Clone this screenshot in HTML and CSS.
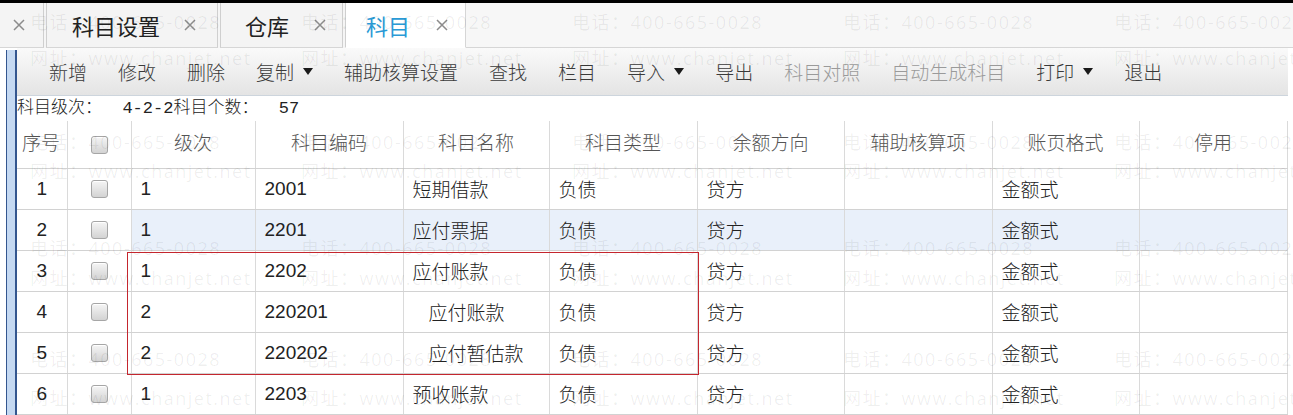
FILE: index.html
```html
<!DOCTYPE html>
<html lang="zh-CN">
<head>
  <meta charset="UTF-8">
  <title>科目</title>
  <link rel="stylesheet" href="styles.css">
</head>
<body>
  <div class="topbar"></div>

  <div class="tabs">
    <div class="tab tab-cut">
      <svg class="close" viewBox="0 0 14 14"><path d="M2 2L12 12M12 2L2 12"/></svg>
    </div>
    <div class="tab tab-one">
      <span class="tab-title">科目设置</span>
      <svg class="close" viewBox="0 0 14 14"><path d="M2 2L12 12M12 2L2 12"/></svg>
    </div>
    <div class="tab tab-two">
      <span class="tab-title">仓库</span>
      <svg class="close" viewBox="0 0 14 14"><path d="M2 2L12 12M12 2L2 12"/></svg>
    </div>
    <div class="tab tab-active">
      <span class="tab-title">科目</span>
      <svg class="close" viewBox="0 0 14 14"><path d="M2 2L12 12M12 2L2 12"/></svg>
    </div>
    <div class="tabs-rest"></div>
  </div>

  <div class="main">
    <div class="side"></div>
    <div class="content">
      <div class="toolbar">
        <span class="tool">新增</span>
        <span class="tool">修改</span>
        <span class="tool">删除</span>
        <span class="tool">复制<i class="caret"></i></span>
        <span class="tool">辅助核算设置</span>
        <span class="tool">查找</span>
        <span class="tool">栏目</span>
        <span class="tool">导入<i class="caret"></i></span>
        <span class="tool">导出</span>
        <span class="tool disabled">科目对照</span>
        <span class="tool disabled">自动生成科目</span>
        <span class="tool">打印<i class="caret"></i></span>
        <span class="tool">退出</span>
      </div>

      <div class="info">科目级次：&nbsp;&nbsp;4-2-2科目个数：&nbsp;&nbsp;57</div>

      <table class="grid">
        <colgroup>
          <col class="c-no">
          <col class="c-check">
          <col class="c-level">
          <col class="c-code">
          <col class="c-name">
          <col class="c-type">
          <col class="c-dir">
          <col class="c-aux">
          <col class="c-fmt">
          <col class="c-stop">
        </colgroup>
        <thead>
          <tr>
            <th>序号</th>
            <th><span class="cb"></span></th>
            <th>级次</th>
            <th>科目编码</th>
            <th>科目名称</th>
            <th>科目类型</th>
            <th>余额方向</th>
            <th>辅助核算项</th>
            <th>账页格式</th>
            <th>停用</th>
          </tr>
        </thead>
        <tbody>
          <tr>
            <td class="no">1</td>
            <td class="check"><span class="cb"></span></td>
            <td>1</td>
            <td>2001</td>
            <td>短期借款</td>
            <td>负债</td>
            <td>贷方</td>
            <td></td>
            <td>金额式</td>
            <td></td>
          </tr>
          <tr class="selected">
            <td class="no">2</td>
            <td class="check"><span class="cb"></span></td>
            <td>1</td>
            <td>2201</td>
            <td>应付票据</td>
            <td>负债</td>
            <td>贷方</td>
            <td></td>
            <td>金额式</td>
            <td></td>
          </tr>
          <tr>
            <td class="no">3</td>
            <td class="check"><span class="cb"></span></td>
            <td>1</td>
            <td>2202</td>
            <td>应付账款</td>
            <td>负债</td>
            <td>贷方</td>
            <td></td>
            <td>金额式</td>
            <td></td>
          </tr>
          <tr>
            <td class="no">4</td>
            <td class="check"><span class="cb"></span></td>
            <td>2</td>
            <td>220201</td>
            <td class="sub">应付账款</td>
            <td>负债</td>
            <td>贷方</td>
            <td></td>
            <td>金额式</td>
            <td></td>
          </tr>
          <tr>
            <td class="no">5</td>
            <td class="check"><span class="cb"></span></td>
            <td>2</td>
            <td>220202</td>
            <td class="sub">应付暂估款</td>
            <td>负债</td>
            <td>贷方</td>
            <td></td>
            <td>金额式</td>
            <td></td>
          </tr>
          <tr>
            <td class="no">6</td>
            <td class="check"><span class="cb"></span></td>
            <td>1</td>
            <td>2203</td>
            <td>预收账款</td>
            <td>负债</td>
            <td>贷方</td>
            <td></td>
            <td>金额式</td>
            <td></td>
          </tr>
        </tbody>
      </table>
    </div>
  </div>

  <!-- watermark layer -->
  <div class="watermark">
    <div class="wm-line t1"><span>电话：400-665-0028</span><span>电话：400-665-0028</span><span>电话：400-665-0028</span><span>电话：400-665-0028</span><span>电话：400-665-0028</span></div>
    <div class="wm-line t2"><span>网址：www.chanjet.net</span><span>网址：www.chanjet.net</span><span>网址：www.chanjet.net</span><span>网址：www.chanjet.net</span><span>网址：www.chanjet.net</span></div>
    <div class="wm-line t3"><span>电话：400-665-0028</span><span>电话：400-665-0028</span><span>电话：400-665-0028</span><span>电话：400-665-0028</span><span>电话：400-665-0028</span></div>
    <div class="wm-line t4"><span>网址：www.chanjet.net</span><span>网址：www.chanjet.net</span><span>网址：www.chanjet.net</span><span>网址：www.chanjet.net</span><span>网址：www.chanjet.net</span></div>
    <div class="wm-line t5"><span>电话：400-665-0028</span><span>电话：400-665-0028</span><span>电话：400-665-0028</span><span>电话：400-665-0028</span><span>电话：400-665-0028</span></div>
    <div class="wm-line t6"><span>网址：www.chanjet.net</span><span>网址：www.chanjet.net</span><span>网址：www.chanjet.net</span><span>网址：www.chanjet.net</span><span>网址：www.chanjet.net</span></div>
    <div class="wm-line t7"><span>电话：400-665-0028</span><span>电话：400-665-0028</span><span>电话：400-665-0028</span><span>电话：400-665-0028</span><span>电话：400-665-0028</span></div>
    <div class="wm-line t8"><span>网址：www.chanjet.net</span><span>网址：www.chanjet.net</span><span>网址：www.chanjet.net</span><span>网址：www.chanjet.net</span><span>网址：www.chanjet.net</span></div>
  </div>

  <!-- red annotation box -->
  <div class="mark"></div>
</body>
</html>
```

FILE: styles.css
```css
html, body {
  margin: 0;
  padding: 0;
}

body {
  width: 1293px;
  height: 415px;
  overflow: hidden;
  position: relative;
  background: #fff;
  font-family: "Noto Sans CJK SC", sans-serif;
  color: #333;
}

.topbar {
  height: 3px;
  background: #000;
}

/* tabs */
.tabs {
  display: flex;
  height: 45px;
  background: #f5f5f5;
}

.tab {
  box-sizing: border-box;
  display: flex;
  align-items: center;
  justify-content: space-between;
  height: 45px;
  margin-right: 2px;
  border-left: 1px solid #cfcfcf;
  border-right: 1px solid #cfcfcf;
  border-bottom: 1px solid #d6d6d6;
  background: #f4f4f4;
}

.tab-cut {
  width: 44px;
  border-left: none;
  padding-left: 12px;
}

.tab-one {
  width: 172px;
  padding: 0 20px 0 25px;
}

.tab-two {
  width: 123px;
  padding: 0 15px 0 24px;
}

.tab-active {
  width: 121px;
  padding: 0 16px 0 20px;
  background: #fff;
  border-bottom-color: #fff;
  border-right: 1px solid #d6d6d6;
  margin-right: 0;
}

.tab-title {
  font-size: 22px;
  color: #222;
  line-height: 1;
}

.tab-active .tab-title {
  color: #2a9ad6;
}

.close {
  width: 14px;
  height: 14px;
  fill: none;
  stroke: #8c8c8c;
  stroke-width: 1.5;
}

.tabs-rest {
  flex: 1;
  border-bottom: 1px solid #d6d6d6;
  background: #f7f7f7;
}

/* main area */
.main {
  display: flex;
  height: 367px;
}

.side {
  width: 8px;
  margin: 2px 0 0 6px;
  background: #c5d9f2;
  border-left: 1px solid #34568f;
  border-right: 2px solid #34568f;
}

.content {
  flex: 1;
  margin-right: 5px;
}

.toolbar {
  display: flex;
  align-items: center;
  gap: 31px;
  height: 47px;
  padding-left: 32px;
  background: linear-gradient(#fafafa, #e4e4e4);
  border-bottom: 1px solid #cdd5dd;
}

.tool {
  display: flex;
  align-items: center;
  font-size: 19px;
  font-weight: 300;
  color: #3a3a3a;
  line-height: 1;
}

.tool.disabled {
  color: #9a9a9a;
}

.caret {
  width: 0;
  height: 0;
  margin-left: 9px;
  border-left: 5.5px solid transparent;
  border-right: 5.5px solid transparent;
  border-top: 7px solid #1a1a1a;
}

.info {
  height: 25px;
  font-family: "Liberation Mono", "Noto Sans CJK SC", monospace;
  font-size: 17px;
  font-weight: 300;
  line-height: 25px;
  color: #222;
}

/* grid */
.grid {
  width: 1270px;
  table-layout: fixed;
  border-collapse: collapse;
}

.c-no { width: 50px; }
.c-check { width: 64px; }
.c-level { width: 124px; }
.c-code { width: 148px; }
.c-name { width: 146px; }
.c-type { width: 148px; }
.c-dir { width: 147px; }
.c-aux { width: 148px; }
.c-fmt { width: 147px; }
.c-stop { width: 148px; }

.grid th,
.grid td {
  box-sizing: border-box;
  border-right: 1px solid #dadada;
  border-bottom: 1px solid #d2d2d2;
}

.grid th {
  height: 47px;
  padding: 0 0 5px;
  font-size: 19px;
  font-weight: 300;
  color: #555;
  text-align: center;
}

.grid th:first-child {
  text-align: left;
  padding-left: 5px;
}

.grid td {
  height: 41px;
  padding: 0 0 0 9px;
  font-family: "Liberation Sans", "Noto Sans CJK SC", sans-serif;
  font-size: 19px;
  font-weight: 300;
  color: #222;
  white-space: nowrap;
}

.grid td.no,
.grid td.check {
  padding: 0;
  text-align: center;
}

.grid td.sub {
  padding-left: 25px;
}

.grid tr.selected td {
  background: #e9f0fa;
}

.grid tr.selected td.no,
.grid tr.selected td.check {
  background: #fff;
}

.cb {
  display: inline-block;
  vertical-align: middle;
  width: 15px;
  height: 16px;
  border: 1px solid #a6a6a6;
  border-radius: 3px;
  background: linear-gradient(#f5f5f5, #d3d3d3);
  box-shadow: inset 0 1px 0 #fff;
}

/* watermark */
.watermark {
  position: absolute;
  left: 30px;
  top: 0;
  right: 0;
  bottom: 0;
  overflow: hidden;
  pointer-events: none;
}

.wm-line {
  position: absolute;
  left: 0;
  display: flex;
  white-space: nowrap;
}

.wm-line span {
  flex: none;
  width: 271px;
  font-family: "Open Sans", "Noto Sans CJK SC", sans-serif;
  font-size: 18px;
  line-height: 18px;
  letter-spacing: 1.5px;
  color: rgba(0, 0, 0, 0.065);
}

.t1 { top: 13px; }
.t2 { top: 49px; }
.t3 { top: 133px; }
.t4 { top: 162px; }
.t5 { top: 239px; }
.t6 { top: 269px; }
.t7 { top: 350px; }
.t8 { top: 389px; }

.mark {
  position: absolute;
  left: 127px;
  top: 252px;
  width: 572px;
  height: 123px;
  box-sizing: border-box;
  border: 1px solid #c4262e;
}
```
